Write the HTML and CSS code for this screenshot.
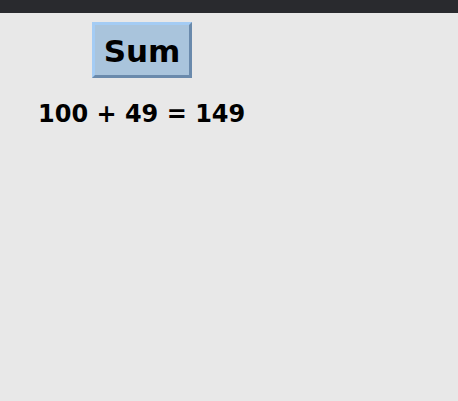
FILE: index.html
```html
<!DOCTYPE html>
<html>
<head>
<meta charset="utf-8">
<link rel="stylesheet" href="styles.css">
</head>
<body>
<div class="topbar"></div>
<main class="content">
  <div class="btn-row"><button class="sum-btn">Sum</button></div>
  <p class="result">100 + 49 = 149</p>
</main>
</body>
</html>
```
FILE: styles.css
```css
html, body {
  margin: 0;
  padding: 0;
  background: #e8e8e8;
  height: 100%;
}
.topbar {
  height: 13px;
  background: #292a2e;
}
.content {
  padding: 9px 0 0 38px;
  font-family: "DejaVu Sans", Verdana, sans-serif;
  font-weight: bold;
}
.btn-row {
  padding-left: 54px;
}
.sum-btn {
  box-sizing: border-box;
  width: 100px;
  height: 56px;
  margin: 0;
  padding: 2px 0 0 0;
  font-family: "DejaVu Sans", Verdana, sans-serif;
  font-weight: bold;
  font-size: 31px;
  color: #000;
  background: #a9c4dc;
  border: 3px solid;
  border-color: #a4ccf4 #6a8aac #6a8aac #a4ccf4;
}
.result {
  margin: 21px 0 0 0;
  font-size: 24px;
  line-height: 30px;
  color: #000;
}
```
